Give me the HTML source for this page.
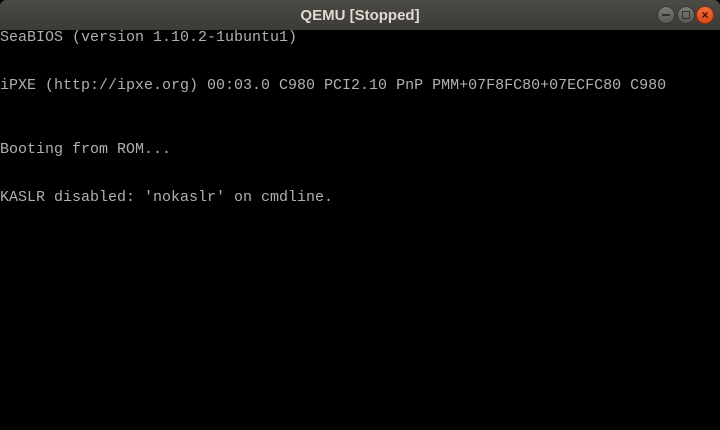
<!DOCTYPE html>
<html><head><meta charset="utf-8"><style>
html,body{margin:0;padding:0;width:720px;height:430px;background:#000;overflow:hidden}
.tb{position:absolute;left:0;top:0;width:720px;height:30px;background:linear-gradient(#4b4a45,#3c3b37);border-radius:6px 6px 0 0;}
.title{position:absolute;top:7px;left:0;width:720px;text-align:center;height:18px;line-height:18px;color:#dfdbd2;font:bold 15px "Liberation Sans",sans-serif}
.b{position:absolute;top:6px;width:18px;height:18px;border-radius:50%;background:linear-gradient(#7a7975,#5a5955);border:1px solid #35342f;box-sizing:border-box}
.scr{position:absolute;left:0;top:30px;color:#b0b0b0;font:15px/16px "Liberation Mono",monospace;white-space:pre}
</style></head><body>
<div class="tb"><div class="title">QEMU [Stopped]</div>
<div class="b" style="left:657px"><div style="position:absolute;left:4px;top:7px;width:8px;height:2px;background:#333"></div></div>
<div class="b" style="left:677px"><div style="position:absolute;left:4px;top:4px;width:6px;height:6px;border:1px solid #333"></div></div>
<div class="b" style="left:696px;background:linear-gradient(#f26d3d,#df4a16);border-color:#8e2e0c;color:#3a1205;font:bold 12px/16px 'Liberation Sans',sans-serif;text-align:center">×</div>
</div>
<div class="scr">SeaBIOS (version 1.10.2-1ubuntu1)


iPXE (http://ipxe.org) 00:03.0 C980 PCI2.10 PnP PMM+07F8FC80+07ECFC80 C980



Booting from ROM...


KASLR disabled: 'nokaslr' on cmdline.</div>
</body></html>
